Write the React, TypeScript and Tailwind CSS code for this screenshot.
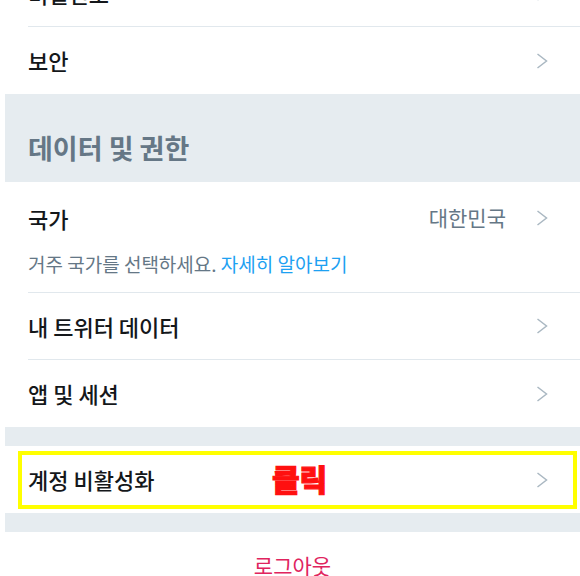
import React from 'react';

const font = { fontFamily: '"Noto Sans CJK KR", "Noto Sans", sans-serif' };

function Chevron() {
  return (
    <svg width="12" height="16" viewBox="0 0 12 16" fill="none" className="shrink-0">
      <polyline points="1.5,1 10.5,8 1.5,15" stroke="#aab8c2" strokeWidth="1.5" strokeLinejoin="miter" />
    </svg>
  );
}

function Row({ label, border = true, className = '' }: { label: string; border?: boolean; className?: string }) {
  return (
    <div className={`ml-[23px] pr-[32px] h-[67px] flex items-center justify-between ${border ? 'border-b border-[#e1e8ed]' : ''} ${className}`}>
      <span className="text-[22px] font-medium text-[#14171a]">{label}</span>
      <Chevron />
    </div>
  );
}

export default function App() {
  return (
    <div className="w-[580px] h-[576px] overflow-hidden bg-white pl-[5px]" style={font}>
      <Row label="비밀번호" className="-mt-[40px]" />
      <Row label="보안" border={false} />

      {/* section header */}
      <div className="h-[88px] bg-[#e6ecf0] pt-[38px] pl-[23px]">
        <h2 className="text-[27px] font-bold leading-[32px] text-[#657786]">데이터 및 권한</h2>
      </div>

      {/* country */}
      <div className="ml-[23px] pr-[32px] h-[111px] border-b border-[#e1e8ed] pt-[19px]">
        <div className="flex items-center justify-between h-[34px]">
          <span className="text-[22px] font-medium text-[#14171a]">국가</span>
          <div className="flex items-center gap-[30px]">
            <span className="text-[21px] text-[#657786]">대한민국</span>
            <Chevron />
          </div>
        </div>
        <p className="mt-[15px] text-[19px] text-[#657786]">
          거주 국가를 선택하세요. <span className="text-[#1da1f2]">자세히 알아보기</span>
        </p>
      </div>

      <Row label="내 트위터 데이터" />
      <Row label="앱 및 세션" border={false} />

      <div className="h-[19px] bg-[#e6ecf0]" />

      {/* deactivate */}
      <div className="relative">
        <Row label="계정 비활성화" border={false} className="h-[66px]" />
        <div className="absolute left-[13px] right-[3px] top-[5px] h-[58px] border-[4px] border-[#ffff00]" />
        <span className="absolute left-[267px] top-[12px] text-[30px] font-black text-[#ff1010] leading-[40px] [-webkit-text-stroke:1.2px_#ff1010]">클릭</span>
      </div>

      <div className="h-[19px] bg-[#e6ecf0]" />

      <div className="h-[67px] flex items-center justify-center">
        <span className="text-[21px] text-[#e0245e]">로그아웃</span>
      </div>
    </div>
  );
}
